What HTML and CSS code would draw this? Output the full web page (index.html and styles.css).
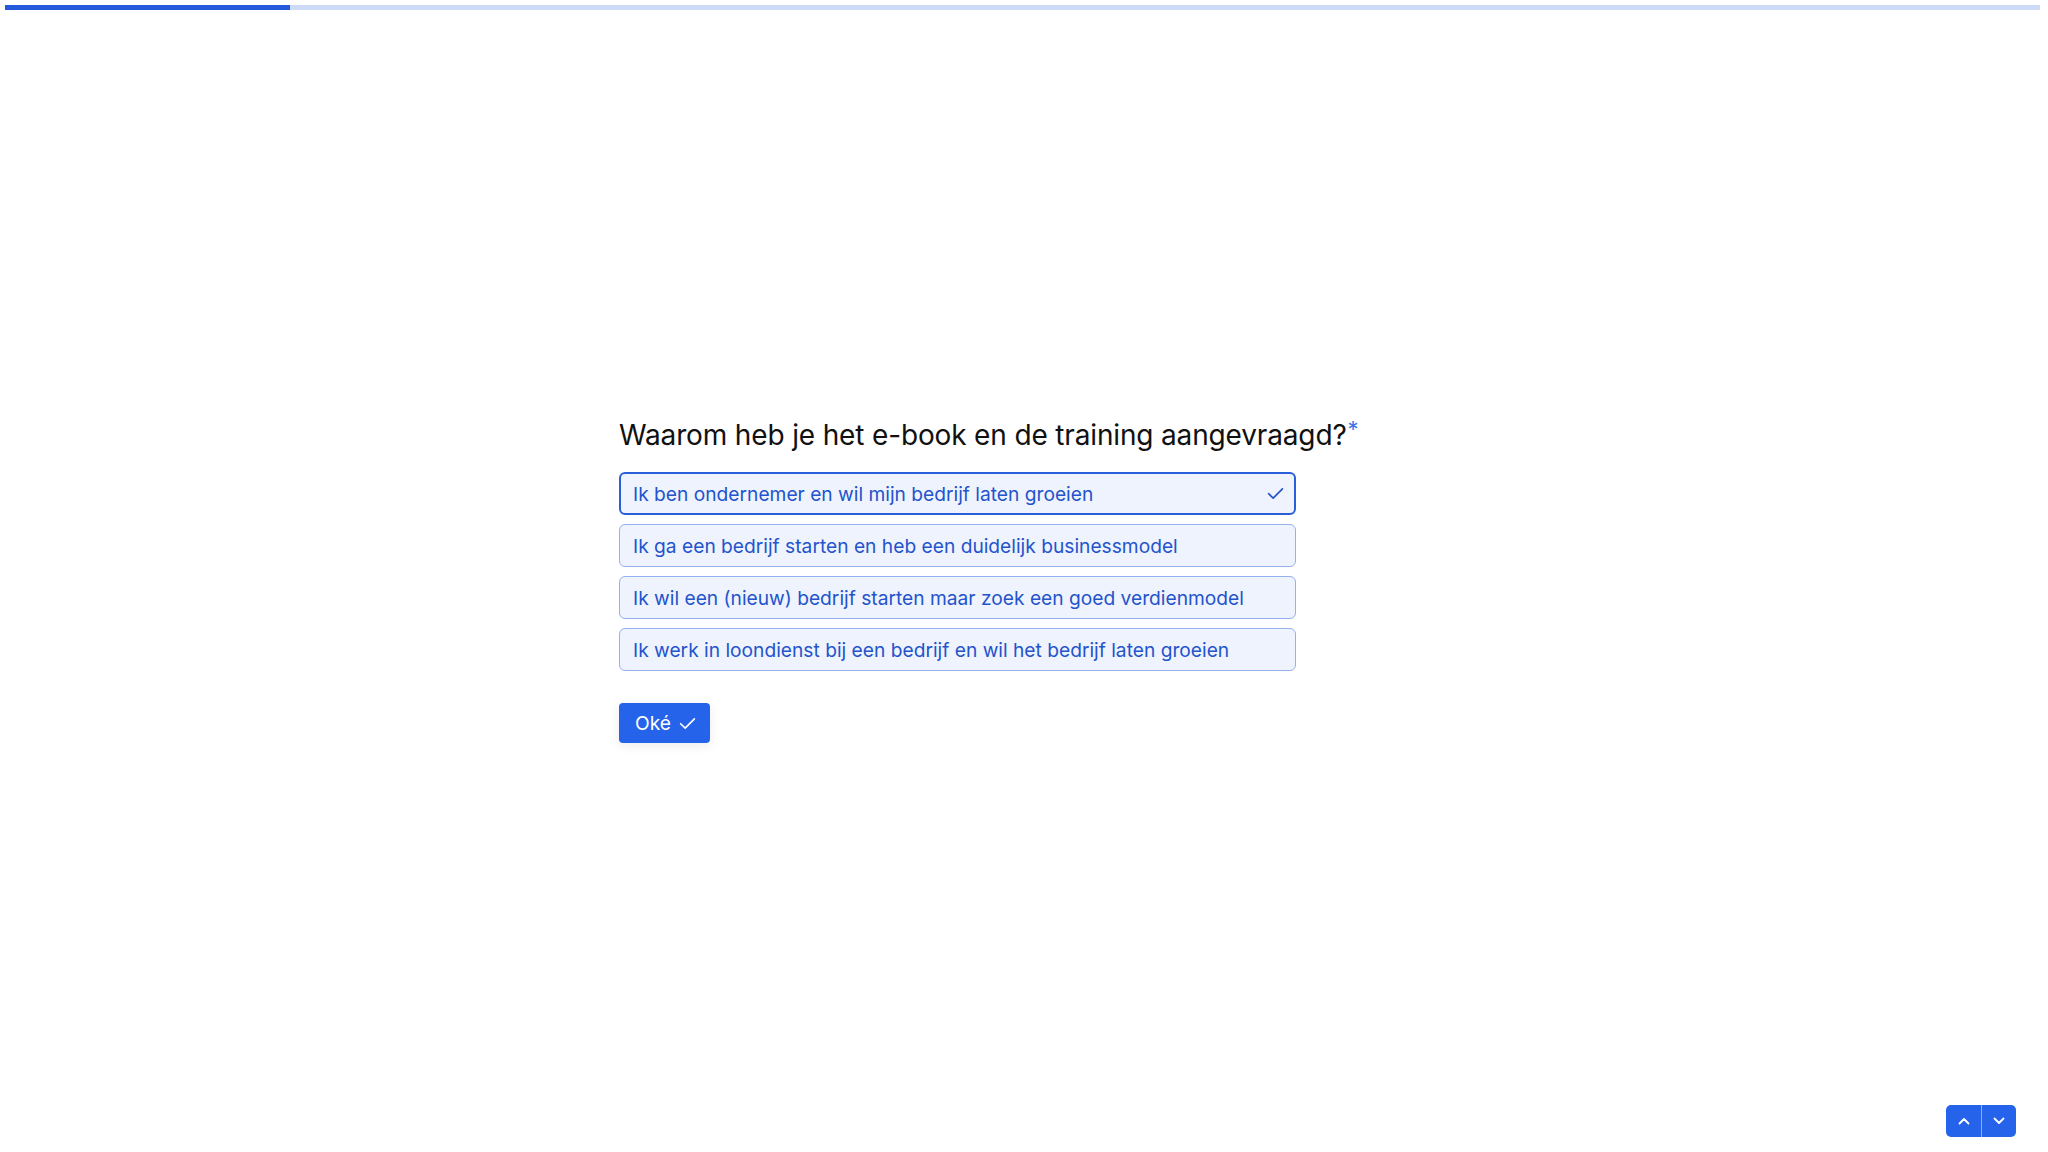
FILE: index.html
```html
<!DOCTYPE html>
<html lang="nl">
<head>
<meta charset="utf-8">
<title>Vraag</title>
<link rel="stylesheet" href="styles.css">
</head>
<body>
<div class="progress"><div class="progress-fill"></div></div>
<main class="screen">
  <section class="question">
    <h1 class="title">Waarom heb je het e-book en de training aangevraagd?<span class="req">*</span></h1>
    <div class="options">
      <div class="option selected">
        <span>Ik ben ondernemer en wil mijn bedrijf laten groeien</span>
        <svg class="tick" width="17" height="13" viewBox="0 0 16 12"><path d="M1.5 6.2 L5.8 10.3 L14.5 1.6" fill="none" stroke="currentColor" stroke-width="1.6" stroke-linecap="round" stroke-linejoin="round"/></svg>
      </div>
      <div class="option"><span>Ik ga een bedrijf starten en heb een duidelijk businessmodel</span></div>
      <div class="option"><span>Ik wil een (nieuw) bedrijf starten maar zoek een goed verdienmodel</span></div>
      <div class="option"><span>Ik werk in loondienst bij een bedrijf en wil het bedrijf laten groeien</span></div>
    </div>
    <button class="ok">Oké
      <svg width="17" height="13" viewBox="0 0 16 12"><path d="M1.5 6.2 L5.8 10.3 L14.5 1.6" fill="none" stroke="#fff" stroke-width="1.5" stroke-linecap="round" stroke-linejoin="round"/></svg>
    </button>
  </section>
</main>
<nav class="nav">
  <button class="nav-btn"><svg width="12" height="8" viewBox="0 0 12 8"><path d="M1.5 6.5 L6 2 L10.5 6.5" fill="none" stroke="#fff" stroke-width="1.8" stroke-linecap="round" stroke-linejoin="round"/></svg></button>
  <button class="nav-btn"><svg width="12" height="8" viewBox="0 0 12 8"><path d="M1.5 1.5 L6 6 L10.5 1.5" fill="none" stroke="#fff" stroke-width="1.8" stroke-linecap="round" stroke-linejoin="round"/></svg></button>
</nav>
</body>
</html>
```
FILE: styles.css
```css
html, body {
  margin: 0;
  padding: 0;
  background: #ffffff;
  font-family: Inter, "Noto Sans", "Liberation Sans", sans-serif;
}

.progress {
  position: fixed;
  top: 5px;
  left: 5px;
  right: 8px;
  height: 5px;
  background: #cddaf8;
}

.progress-fill {
  width: 285px;
  height: 100%;
  background: #2459dc;
}

.screen {
  min-height: 100vh;
  display: flex;
  align-items: center;
  justify-content: center;
  box-sizing: border-box;
  padding-top: 8px;
}

.question {
  width: 810px;
  display: flex;
  flex-direction: column;
  align-items: flex-start;
}

.title {
  margin: 0 0 19px 0;
  font-size: 28px;
  line-height: 36px;
  font-weight: 400;
  color: #111111;
  letter-spacing: -0.15px;
}

.req {
  color: #3b73e6;
  font-size: 22px;
  vertical-align: top;
  position: relative;
  top: -6px;
  margin-left: 1px;
}

.options {
  width: 677px;
  display: flex;
  flex-direction: column;
  gap: 9px;
}

.option {
  height: 43px;
  box-sizing: border-box;
  border: 1px solid #95b0ee;
  border-radius: 6px;
  background: #eef3fd;
  color: #2453cc;
  font-size: 19.2px;
  display: flex;
  align-items: center;
  justify-content: space-between;
  padding: 0 11px 0 13px;
}

.option.selected {
  border: 2px solid #2b5fd9;
  padding: 0 10px 0 12px;
}

.tick {
  color: #2453cc;
}

.ok {
  margin-top: 32px;
  height: 40px;
  border: none;
  border-radius: 4px;
  background: #2563eb;
  color: #ffffff;
  font-family: inherit;
  font-size: 19.2px;
  display: flex;
  align-items: center;
  gap: 8px;
  padding: 0 14px 0 16px;
  box-shadow: 0 3px 12px rgba(0, 0, 0, 0.08);
}

.nav {
  position: fixed;
  right: 32px;
  bottom: 15px;
  display: flex;
  border-radius: 5px;
  overflow: hidden;
}

.nav-btn {
  width: 35px;
  height: 32px;
  border: none;
  background: #2563eb;
  display: flex;
  align-items: center;
  justify-content: center;
  padding: 0;
}

.nav-btn + .nav-btn {
  border-left: 1px solid #8fb0f4;
}
```
